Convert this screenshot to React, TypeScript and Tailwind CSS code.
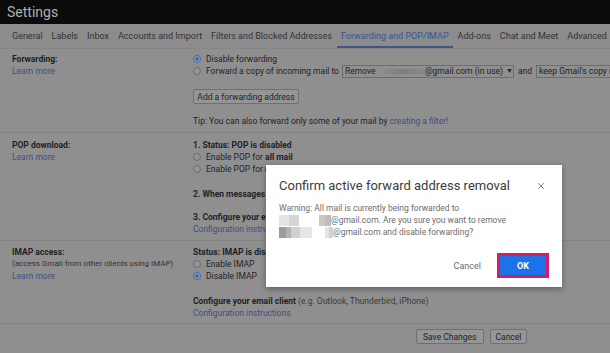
import { X } from "lucide-react";

const Radio = ({ on }: { on?: boolean }) => (
  <span
    className={
      "mr-[5px] inline-flex h-[8px] w-[8px] shrink-0 items-center justify-center rounded-full border " +
      (on ? "border-[#3d5ea8] bg-[#a9a9a9]" : "border-[#6b6b6b] bg-[#959595]")
    }
  >
    {on && <span className="h-[4px] w-[4px] rounded-full bg-[#3f64b8]" />}
  </span>
);

const Link = ({ children }: { children: React.ReactNode }) => (
  <span className="text-[#3b4f86]">{children}</span>
);

const Blur = ({ cells }: { cells: [string, number][] }) => (
  <span className="inline-flex h-[11px] align-middle">
    {cells.map(([c, w], i) => (
      <span key={i} className="h-full" style={{ background: c, width: w }} />
    ))}
  </span>
);

export default function App() {
  const tabs = [
    "General",
    "Labels",
    "Inbox",
    "Accounts and Import",
    "Filters and Blocked Addresses",
    "Forwarding and POP/IMAP",
    "Add-ons",
    "Chat and Meet",
    "Advanced",
  ];

  return (
    <div className="relative h-[353px] w-[610px] overflow-hidden bg-[#8f8f8f] font-['Roboto',Arial,sans-serif] text-[8.5px] leading-[12px] text-[#1f1f1f]">
      {/* header */}
      <div className="flex h-[24px] items-center bg-[#0b0b0b] pl-[7px] text-[14px] text-[#b0b0b0]">
        Settings
      </div>

      {/* tabs */}
      <div className="flex h-[25px] items-stretch gap-[9px] whitespace-nowrap border-b border-[#858585] bg-[#8c8c8c] pl-[12px] text-[9px] text-[#333]">
        {tabs.map((t) => (
          <div
            key={t}
            className={
              "flex items-center " +
              (t === "Forwarding and POP/IMAP"
                ? "-mx-[4px] border-b-2 border-[#3e5688] px-[4px] pt-[2px] text-[#3a5590]"
                : "")
            }
          >
            {t}
          </div>
        ))}
      </div>

      {/* forwarding */}
      <div className="flex border-b border-[#848484] pb-[5px] pt-[4px]">
        <div className="w-[193px] shrink-0 pl-[12px]">
          <div className="font-bold">Forwarding:</div>
          <Link>Learn more</Link>
        </div>
        <div className="whitespace-nowrap">
          <div className="flex h-[12px] items-center">
            <Radio on />
            Disable forwarding
          </div>
          <div className="flex h-[12px] items-center">
            <Radio />
            Forward a copy of incoming mail to
            <span className="ml-[3px] flex h-[13px] w-[172px] items-center border border-[#6d6d6d] pl-[2px]">
              Remove
              <span className="ml-[4px] h-[5px] w-[50px] bg-gradient-to-r from-[#8f8f8f] via-[#7c7c7c] to-[#8a8a8a]" />
              @gmail.com (in use)
              <span className="ml-[3px] text-[7px]">&#9660;</span>
            </span>
            <span className="mx-[4px]">and</span>
            <span className="flex h-[13px] items-center border border-[#6d6d6d] pl-[2px] pr-[20px]">
              keep Gmail's copy in the Inbox
            </span>
          </div>
          <div className="mt-[12px] flex h-[15px] w-[106px] items-center justify-center rounded-[2px] border border-[#6f6f6f] bg-[#959595]">
            Add a forwarding address
          </div>
          <div className="mt-[11px]">
            Tip: You can also forward only some of your mail by <Link>creating a filter!</Link>
          </div>
        </div>
      </div>

      {/* pop */}
      <div className="flex border-b border-[#848484] pb-[6px] pt-[6px]">
        <div className="w-[193px] shrink-0 pl-[12px]">
          <div className="font-bold">POP download:</div>
          <Link>Learn more</Link>
        </div>
        <div className="whitespace-nowrap">
          <div className="font-bold">1. Status: POP is disabled</div>
          <div className="flex h-[12px] items-center">
            <Radio />
            Enable POP for&nbsp;<b>all mail</b>
          </div>
          <div className="flex h-[11px] items-center">
            <Radio />
            Enable POP for&nbsp;<b>mail that arrives from now on</b>
          </div>
          <div className="mt-[14px] font-bold">2. When messages are accessed with POP</div>
          <div className="mt-[11px] font-bold">3. Configure your email client</div>
          <div className="h-[11px]">
            <Link>Configuration instructions</Link>
          </div>
        </div>
      </div>

      {/* imap */}
      <div className="flex border-b border-[#848484] pb-[4px] pt-[5px]">
        <div className="w-[193px] shrink-0 pl-[12px]">
          <div className="font-bold">IMAP access:</div>
          <div className="text-[8px] text-[#333]">(access Gmail from other clients using IMAP)</div>
          <div className="h-[11px]">
            <Link>Learn more</Link>
          </div>
        </div>
        <div className="whitespace-nowrap">
          <div className="font-bold">Status: IMAP is disabled</div>
          <div className="flex h-[12px] items-center">
            <Radio />
            Enable IMAP
          </div>
          <div className="flex h-[11px] items-center">
            <Radio on />
            Disable IMAP
          </div>
          <div className="mt-[14px]">
            <b>Configure your email client</b>{" "}
            <span className="text-[#3a3a3a]">(e.g. Outlook, Thunderbird, iPhone)</span>
          </div>
          <div>
            <Link>Configuration instructions</Link>
          </div>
        </div>
      </div>

      <div className="mt-[5px] flex gap-[6px] pl-[416px]">
        <div className="flex h-[15px] items-center rounded-[2px] border border-[#6f6f6f] bg-[#959595] px-[6px]">
          Save Changes
        </div>
        <div className="flex h-[15px] items-center rounded-[2px] border border-[#6f6f6f] bg-[#959595] px-[5px]">
          Cancel
        </div>
      </div>

      {/* dialog */}
      <div className="absolute left-[266px] top-[165px] h-[122px] w-[296px] bg-white px-[13px] pt-[12px] shadow-[0_2px_6px_rgba(0,0,0,0.35)]">
        <div className="flex items-center justify-between">
          <div className="text-[13px] leading-[18px] text-[#3c3c3c]">
            Confirm active forward address removal
          </div>
          <X className="mr-[3px] h-[10px] w-[10px] text-[#6a6a6a]" strokeWidth={2} />
        </div>
        <div className="mt-[7px] text-[8.5px] leading-[12px] text-[#6d6d6d]">
          <div>Warning: All mail is currently being forwarded to</div>
          <div className="flex items-center">
            <Blur
              cells={[
                ["#e4e4e4", 10],
                ["#d6d6d6", 10],
                ["#ffffff", 20],
                ["#c9c9c9", 6],
                ["#bdbdbd", 6],
              ]}
            />
            @gmail.com. Are you sure you want to remove
          </div>
          <div className="flex items-center">
            <Blur
              cells={[
                ["#9c9c9c", 7],
                ["#b3b3b3", 5],
                ["#cfcfcf", 9],
                ["#e6e6e6", 12],
                ["#ffffff", 13],
                ["#e4e4e4", 4],
                ["#d2d2d2", 4],
              ]}
            />
            @gmail.com and disable forwarding?
          </div>
        </div>
        <div className="mt-[15px] flex items-center justify-end gap-[16px]">
          <div className="text-[9px] text-[#6a6a6a]">Cancel</div>
          <div className="flex h-[25px] w-[52px] items-center justify-center border-[3px] border-[#d81b63] bg-[#1a73e8] text-[9px] font-bold text-white">
            OK
          </div>
        </div>
      </div>
    </div>
  );
}
